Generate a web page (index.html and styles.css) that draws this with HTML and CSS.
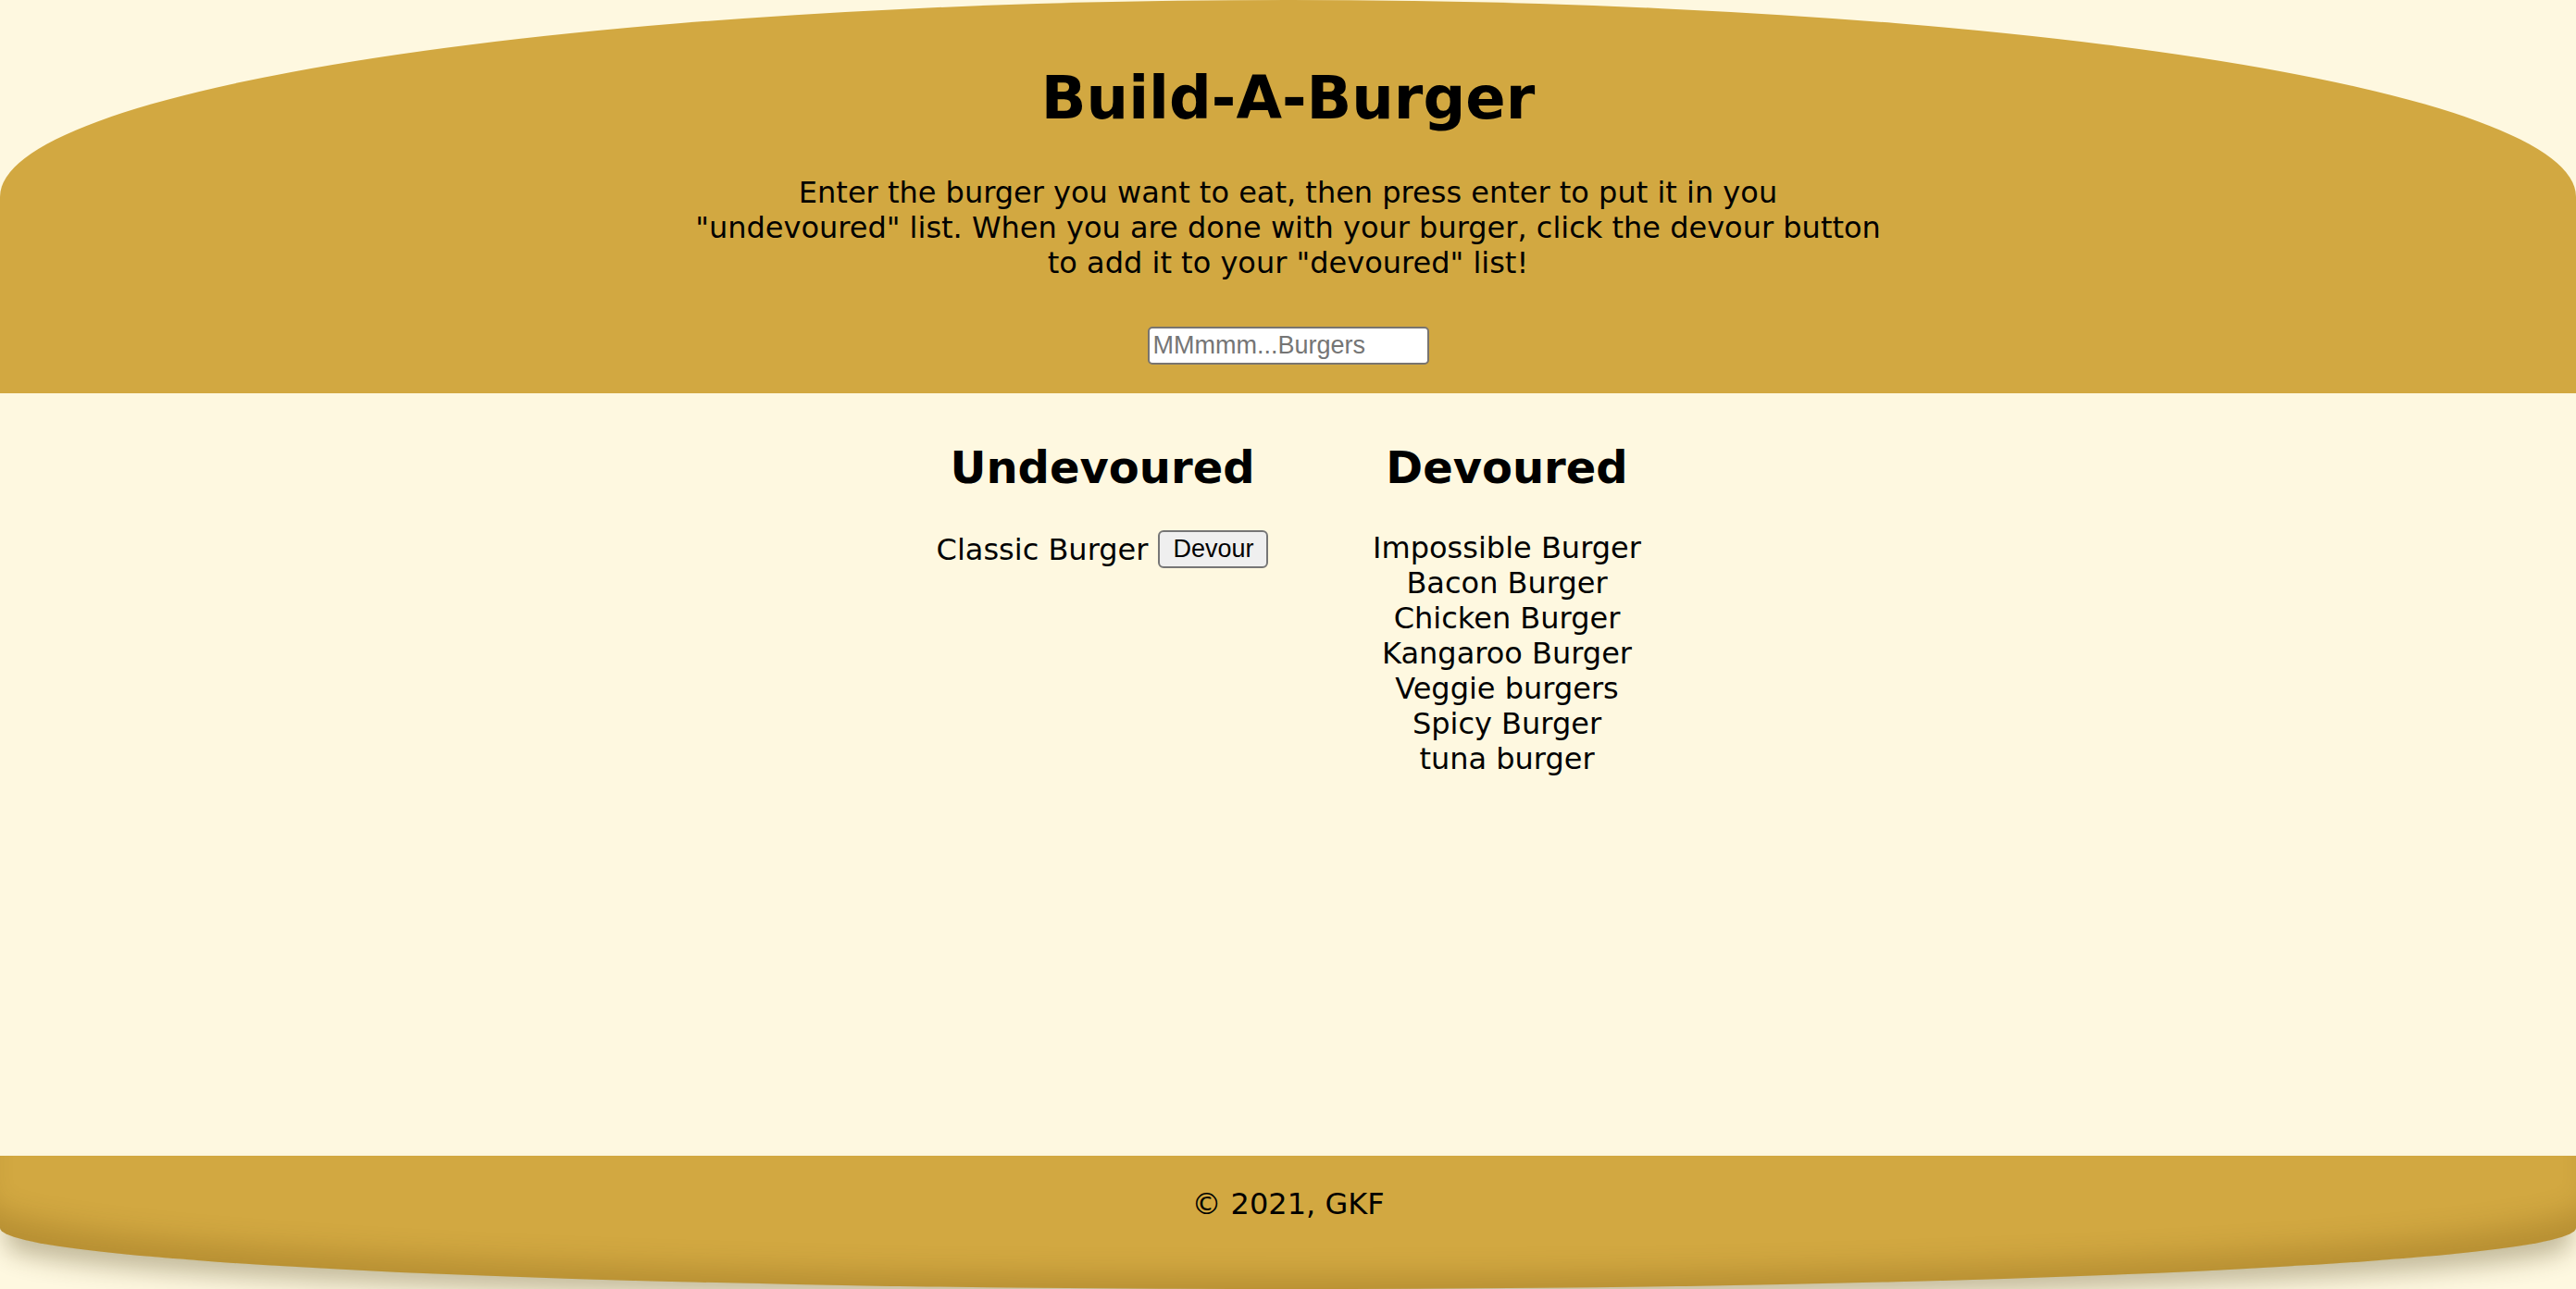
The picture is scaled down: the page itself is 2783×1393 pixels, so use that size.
FILE: index.html
```html
<!DOCTYPE html>
<html lang="en">
<head>
<meta charset="utf-8">
<title>Build-A-Burger</title>
<link rel="stylesheet" href="styles.css">
</head>
<body>
  <header class="bun-top">
    <h1 class="title">Build-A-Burger</h1>
    <p class="intro">Enter the burger you want to eat, then press enter to put it in you<br>"undevoured" list. When you are done with your burger, click the devour button<br>to add it to your "devoured" list!</p>
    <form class="burger-form">
      <input class="burger-input" type="text" placeholder="MMmmm...Burgers">
    </form>
  </header>

  <main class="lists">
    <section class="column column-undevoured">
      <h2 class="column-title">Undevoured</h2>
      <ul class="burger-list">
        <li class="burger-row">
          <span class="burger-name">Classic Burger</span>
          <button class="devour-btn" type="button">Devour</button>
        </li>
      </ul>
    </section>
    <section class="column column-devoured">
      <h2 class="column-title">Devoured</h2>
      <ul class="burger-list">
        <li class="burger-item">Impossible Burger</li>
        <li class="burger-item">Bacon Burger</li>
        <li class="burger-item">Chicken Burger</li>
        <li class="burger-item">Kangaroo Burger</li>
        <li class="burger-item">Veggie burgers</li>
        <li class="burger-item">Spicy Burger</li>
        <li class="burger-item">tuna burger</li>
      </ul>
    </section>
  </main>

  <footer class="bun-bottom">
    <p class="copyright">© 2021, GKF</p>
  </footer>
</body>
</html>
```

FILE: styles.css
```css
* {
  box-sizing: border-box;
}

html, body {
  margin: 0;
  padding: 0;
}

body {
  min-height: 100vh;
  display: flex;
  flex-direction: column;
  background: #fef8e0;
  color: #000;
  font-family: "DejaVu Sans", Verdana, sans-serif;
  font-size: 32px;
  line-height: 38px;
  overflow: hidden;
}

.bun-top {
  background: #d2a841;
  border-radius: 50% 50% 0 0;
  height: 425px;
  padding-top: 69px;
  text-align: center;
  flex: none;
}

.title {
  margin: 0;
  font-size: 64px;
  line-height: 74px;
  font-weight: bold;
}

.intro {
  margin: 46px 0 0;
  font-size: 32px;
  line-height: 38px;
}

.burger-form {
  margin: 50px 0 0;
  display: flex;
  justify-content: center;
}

.burger-input {
  width: 304px;
  height: 41px;
  margin: 0;
  padding: 2px 4px;
  border: 2px solid #787470;
  border-radius: 5px;
  background: #fff;
  font-family: "Liberation Sans", Arial, sans-serif;
  font-size: 27px;
  color: #000;
}

.burger-input::placeholder {
  color: #757575;
}

.lists {
  flex: 1;
  display: flex;
  justify-content: center;
  gap: 107px;
  padding: 52px 0 0 6px;
}

.column {
  text-align: center;
}

.column-undevoured {
  width: 360px;
}

.column-devoured {
  width: 300px;
}

.column-title {
  margin: 0;
  font-size: 48px;
  line-height: 56px;
  font-weight: bold;
}

.burger-list {
  list-style: none;
  margin: 40px 0 0;
  padding: 0;
}

.burger-row {
  display: flex;
  justify-content: center;
  align-items: center;
  gap: 11px;
  height: 41px;
}

.burger-item {
  line-height: 38px;
}

.devour-btn {
  height: 41px;
  margin: 0;
  padding: 0 14px;
  border: 2px solid #767676;
  border-radius: 6px;
  background: #efefef;
  font-family: "Liberation Sans", Arial, sans-serif;
  font-size: 27px;
  color: #000;
}

.bun-bottom {
  flex: none;
  height: 144px;
  background: #d2a841;
  border-radius: 0 0 50% 50% / 0 0 66px 66px;
  box-shadow: 0 18px 26px -6px rgba(70, 55, 10, 0.32), inset 0 -30px 30px -16px rgba(90, 60, 0, 0.22);
  padding-top: 33px;
  text-align: center;
}

.copyright {
  margin: 0;
  font-size: 32px;
  line-height: 38px;
}
```
